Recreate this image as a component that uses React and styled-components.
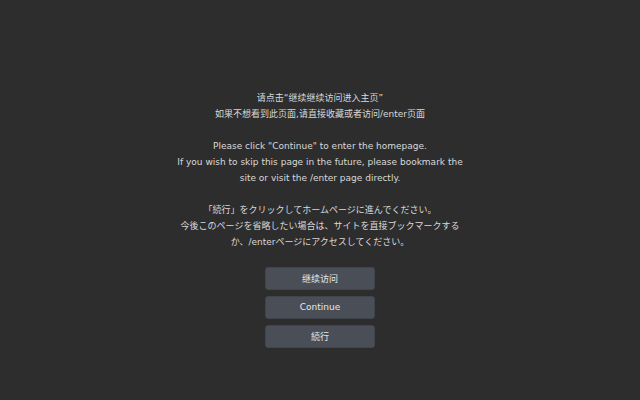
import React from 'react';
import styled, { createGlobalStyle } from 'styled-components';

const GlobalStyle = createGlobalStyle`
  html, body {
    margin: 0;
    padding: 0;
    background: #2d2d2d;
  }
  body {
    font-family: "DejaVu Sans", "Noto Sans CJK SC", sans-serif;
  }
`;

const Page = styled.main`
  box-sizing: border-box;
  min-height: 400px;
  padding-top: 37px;
  display: flex;
  align-items: center;
  justify-content: center;
`;

const Panel = styled.div`
  width: 287px;
  display: flex;
  flex-direction: column;
  align-items: center;
  gap: 16px;
`;

const Message = styled.p`
  margin: 0;
  font-size: 9px;
  line-height: 16px;
  color: #d9d9d9;
  text-align: center;
`;

const Buttons = styled.div`
  display: flex;
  flex-direction: column;
  gap: 6px;
  margin-top: 1px;
`;

const Button = styled.button`
  width: 110px;
  height: 23px;
  background: #4a4f57;
  color: #e8e8e8;
  border: 1px solid #40444b;
  border-radius: 3px;
  font-family: "DejaVu Sans", "Noto Sans CJK SC", sans-serif;
  font-size: 9px;
  cursor: pointer;
  padding: 0;
`;

const App = () => {
  return (
    <>
      <GlobalStyle />
      <Page>
        <Panel>
          <Message>
            请点击“继续继续访问进入主页”
            <br />
            如果不想看到此页面,请直接收藏或者访问/enter页面
          </Message>
          <Message>
            Please click "Continue" to enter the homepage.
            <br />
            If you wish to skip this page in the future, please bookmark the
            site or visit the /enter page directly.
          </Message>
          <Message>
            「続行」をクリックしてホームページに進んでください。
            <br />
            今後このページを省略したい場合は、サイトを直接ブックマークするか、/enterページにアクセスしてください。
          </Message>
          <Buttons>
            <Button>继续访问</Button>
            <Button>Continue</Button>
            <Button>続行</Button>
          </Buttons>
        </Panel>
      </Page>
    </>
  );
};

export default App;
